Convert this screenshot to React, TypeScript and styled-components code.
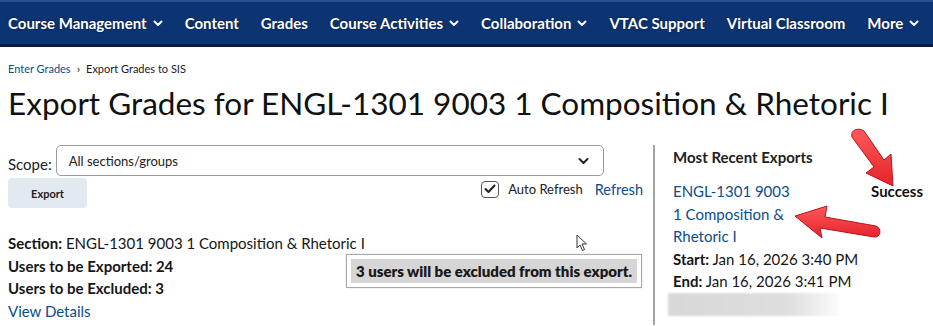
import styled, { createGlobalStyle } from 'styled-components';

const GlobalStyle = createGlobalStyle`
  html, body {
    margin: 0;
    padding: 0;
    background: #ffffff;
    font-family: Lato, "Noto Sans", "Liberation Sans", sans-serif;
    color: #202122;
  }
  * { box-sizing: border-box; }
`;

const navItems = [
  { label: 'Course Management', menu: true },
  { label: 'Content', menu: false },
  { label: 'Grades', menu: false },
  { label: 'Course Activities', menu: true },
  { label: 'Collaboration', menu: true },
  { label: 'VTAC Support', menu: false },
  { label: 'Virtual Classroom', menu: false },
  { label: 'More', menu: true },
];

const Chevron = () => (
  <svg width="10" height="7" viewBox="0 0 10 7">
    <path d="M1.5 1.5 L5 5 L8.5 1.5" fill="none" stroke="#fff" strokeWidth="2" strokeLinecap="round" strokeLinejoin="round" />
  </svg>
);

const SmallChevron = () => (
  <svg width="11" height="8" viewBox="0 0 11 8">
    <path d="M1.5 2 L5.5 6 L9.5 2" fill="none" stroke="#222" strokeWidth="2" strokeLinecap="round" strokeLinejoin="round" />
  </svg>
);

export default function App() {
  return (
    <Page>
      <GlobalStyle />
      <Nav>
        {navItems.map((item) => (
          <NavItem key={item.label}>
            {item.label}
            {item.menu && <Chevron />}
          </NavItem>
        ))}
      </Nav>

      <Header>
        <Breadcrumb>
          <Link href="#">Enter Grades</Link>
          <Sep>›</Sep>
          <span>Export Grades to SIS</span>
        </Breadcrumb>
        <Title>Export Grades for ENGL-1301 9003 1 Composition &amp; Rhetoric I</Title>
      </Header>

      <Body>
        <Main>
          <ScopeRow>
            <Label>Scope:</Label>
            <Select>
              <span>All sections/groups</span>
              <SmallChevron />
            </Select>
          </ScopeRow>
          <ActionRow>
            <Button>Export</Button>
            <RefreshGroup>
              <Checkbox>
                <svg width="12" height="10" viewBox="0 0 12 10">
                  <path d="M1.5 5 L4.5 8 L10.5 1.5" fill="none" stroke="#222" strokeWidth="2" strokeLinecap="round" strokeLinejoin="round" />
                </svg>
              </Checkbox>
              <SmallText>Auto Refresh</SmallText>
              <Link href="#">Refresh</Link>
            </RefreshGroup>
          </ActionRow>
          <Info>
            <Line><b>Section:</b> ENGL-1301 9003 1 Composition &amp; Rhetoric I</Line>
            <Line><b>Users to be Exported: 24</b></Line>
            <Line><b>Users to be Excluded: 3</b></Line>
            <Line><Link href="#">View Details</Link></Line>
          </Info>
          <Tooltip>
            <TooltipInner>3 users will be excluded from this export.</TooltipInner>
          </Tooltip>
          <Cursor width="12" height="18" viewBox="0 0 12 18">
            <path d="M1 1 L1 14 L4 11 L6.5 16.5 L8.5 15.5 L6 10 L10.5 10 Z" fill="#fff" stroke="#333" strokeWidth="1" strokeLinejoin="round" />
          </Cursor>
        </Main>

        <Side>
          <SideTitle>Most Recent Exports</SideTitle>
          <ExportItem>
            <ExportTop>
              <ExportLink href="#">ENGL-1301 9003 1 Composition &amp; Rhetoric I</ExportLink>
              <Status>Success</Status>
            </ExportTop>
            <Line><b>Start:</b> Jan 16, 2026 3:40 PM</Line>
            <Line><b>End:</b> Jan 16, 2026 3:41 PM</Line>
            <Blur />
          </ExportItem>
        </Side>
      </Body>

      <Arrows width="933" height="326" viewBox="0 0 933 326">
        <defs>
          <linearGradient id="ag" x1="0" y1="0" x2="0" y2="1">
            <stop offset="0" stopColor="#ff5a5a" />
            <stop offset="1" stopColor="#e3222a" />
          </linearGradient>
        </defs>
        <path
          d="M852 137 C850 130 858 127 864 131 L884 160 L891 154 L893 186 L866 173 L874 167 Z"
          fill="url(#ag)"
          stroke="#b8141c"
          strokeWidth="1"
          strokeLinejoin="round"
        />
        <path
          d="M876 226 C882 228 881 238 874 237 L820 228 L822 238 L795 216 L827 206 L825 217 Z"
          fill="url(#ag)"
          stroke="#b8141c"
          strokeWidth="1"
          strokeLinejoin="round"
        />
      </Arrows>
    </Page>
  );
}

const Page = styled.div`
  position: relative;
  width: 933px;
  height: 326px;
  overflow: hidden;
`;

const Nav = styled.nav`
  display: flex;
  align-items: center;
  gap: 22px;
  height: 47px;
  padding: 0 8px;
  background: #0c3472;
  border-top: 2px solid #2a5090;
  border-bottom: 3px solid #061c44;
`;

const NavItem = styled.div`
  display: flex;
  align-items: center;
  gap: 6px;
  color: #ffffff;
  font-size: 15px;
  font-weight: 700;
  white-space: nowrap;
  text-shadow: 0 0 2px rgba(0, 0, 0, 0.6);
`;

const Header = styled.header`
  padding: 14px 8px 0;
`;

const Breadcrumb = styled.div`
  display: flex;
  align-items: center;
  gap: 6px;
  font-size: 11px;
  line-height: 16px;
  color: #202122;
`;

const Sep = styled.span`
  font-size: 12px;
`;

const Link = styled.a`
  color: #0b4d8a;
  text-decoration: none;
  font-size: inherit;
`;

const Title = styled.h1`
  margin: 6px 0 0;
  font-size: 31.5px;
  font-weight: 400;
  line-height: 40px;
  color: #111;
  white-space: nowrap;
`;

const Body = styled.div`
  display: grid;
  grid-template-columns: 655px 1fr;
  margin-top: 22px;
`;

const Main = styled.div`
  position: relative;
  padding: 0 10px 0 8px;
  border-right: 2px solid #a4a4a4;
  min-height: 180px;
`;

const ScopeRow = styled.div`
  display: flex;
  align-items: center;
  gap: 4px;
`;

const Label = styled.span`
  font-size: 15px;
  padding-top: 7px;
`;

const Select = styled.div`
  display: flex;
  align-items: center;
  justify-content: space-between;
  width: 548px;
  height: 31px;
  padding: 0 14px 0 12px;
  border: 1px solid #9a9a9a;
  border-radius: 5px;
  font-size: 13px;
  color: #222;
`;

const ActionRow = styled.div`
  display: flex;
  justify-content: space-between;
  align-items: center;
  margin-top: 2px;
`;

const Button = styled.button`
  width: 79px;
  height: 30px;
  border: none;
  border-radius: 4px;
  background: #e3e9f1;
  font-family: inherit;
  font-size: 11px;
  font-weight: 700;
  color: #222;
`;

const RefreshGroup = styled.div`
  display: flex;
  align-items: center;
  gap: 8px;
  margin-top: -8px;
  font-size: 14.5px;
`;

const Checkbox = styled.span`
  display: flex;
  align-items: center;
  justify-content: center;
  width: 18px;
  height: 17px;
  border: 1px solid #555;
  border-radius: 4px;
  margin-right: 1px;
`;

const SmallText = styled.span`
  font-size: 13px;
  margin-right: 4px;
`;

const Info = styled.div`
  margin-top: 24px;
`;

const Line = styled.div`
  font-size: 15px;
  line-height: 22.5px;
  color: #161616;
  white-space: nowrap;
  & b { font-weight: 700; }
`;

const Tooltip = styled.div`
  position: absolute;
  left: 346px;
  top: 109px;
  width: 296px;
  height: 34px;
  padding: 4px;
  background: #fff;
  border: 1px solid #a8a8a8;
  box-shadow: 0 0 2px rgba(0, 0, 0, 0.15);
`;

const TooltipInner = styled.div`
  height: 100%;
  padding: 0 5px;
  display: flex;
  align-items: center;
  background: #d6d6d6;
  font-size: 15px;
  font-weight: 800;
  color: #1a1a1a;
  white-space: nowrap;
`;

const Cursor = styled.svg`
  position: absolute;
  left: 576px;
  top: 89px;
`;

const Side = styled.aside`
  padding: 2px 0 0 18px;
`;

const SideTitle = styled.div`
  font-size: 15px;
  font-weight: 700;
  line-height: 20px;
`;

const ExportItem = styled.div`
  margin-top: 13px;
`;

const ExportTop = styled.div`
  display: flex;
  align-items: flex-start;
  justify-content: space-between;
  padding-right: 10px;
`;

const ExportLink = styled.a`
  width: 122px;
  font-size: 15px;
  line-height: 22.5px;
  color: #0b4d8a;
  text-decoration: none;
`;

const Status = styled.span`
  font-size: 15px;
  font-weight: 700;
  line-height: 22.5px;
  color: #111;
`;

const Blur = styled.div`
  width: 170px;
  height: 23px;
  margin: 0 0 0 -5px;
  background: linear-gradient(90deg, #d8d8d8 0%, #dedede 70%, #fafafa 100%);
  filter: blur(1px);
`;

const Arrows = styled.svg`
  position: absolute;
  left: 0;
  top: 0;
  pointer-events: none;
`;
